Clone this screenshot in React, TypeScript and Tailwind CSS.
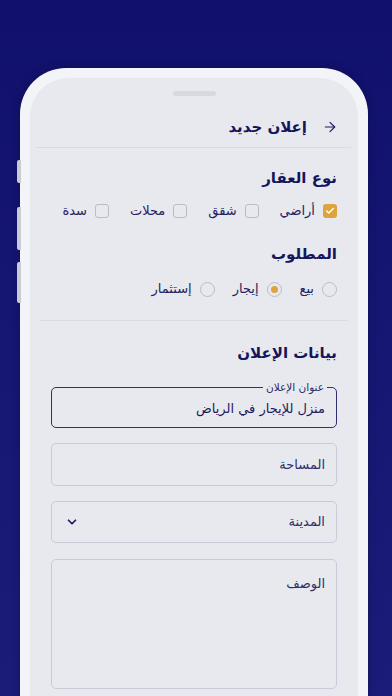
import { ArrowRight, Check, ChevronDown } from "lucide-react";

const font = { fontFamily: '"DejaVu Sans", "Noto Sans", sans-serif' };

function CheckItem({ label, checked }: { label: string; checked?: boolean }) {
    return (
        <div className="flex items-center gap-[8px]">
            {checked ? (
                <span className="flex h-[14px] w-[14px] items-center justify-center rounded-[3px] bg-[#dea33b]">
                    <Check className="h-[10px] w-[10px] text-white" strokeWidth={3.5} />
                </span>
            ) : (
                <span className="h-[14px] w-[14px] rounded-[3px] border border-[#b9bdc9]" />
            )}
            <span className="text-[13px] text-[#23235f]">{label}</span>
        </div>
    );
}

function RadioItem({ label, checked }: { label: string; checked?: boolean }) {
    return (
        <div className="flex items-center gap-[8px]">
            <span className="flex h-[15px] w-[15px] items-center justify-center rounded-full border border-[#b9bdc9]">
                {checked && <span className="h-[7px] w-[7px] rounded-full bg-[#dea33b]" />}
            </span>
            <span className="text-[13px] text-[#23235f]">{label}</span>
        </div>
    );
}

export default function App() {
    return (
        <div
            dir="rtl"
            style={font}
            className="relative h-[696px] w-[392px] overflow-hidden bg-gradient-to-b from-[#11106d] to-[#1b1c79]"
        >
            <div className="absolute left-[20px] top-[68px] h-[700px] w-[348px]">
                {/* Side buttons */}
                <span className="absolute left-[-3px] top-[92px] h-[23px] w-[4px] rounded-l-[2px] bg-[#c9ccd6]" />
                <span className="absolute left-[-3px] top-[139px] h-[43px] w-[4px] rounded-l-[2px] bg-[#c9ccd6]" />
                <span className="absolute left-[-3px] top-[194px] h-[41px] w-[4px] rounded-l-[2px] bg-[#c9ccd6]" />

                {/* Phone body */}
                <div className="h-full w-full rounded-t-[46px] bg-[#f3f4f7] px-[10px] pt-[10px] shadow-[0_0_10px_rgba(0,0,0,0.25)]">
                    <div className="flex h-full flex-col rounded-t-[38px] bg-[#e8e9ee]">
                        <div className="flex justify-center pt-[13px]">
                            <span className="h-[5px] w-[43px] rounded-full bg-[#d6d9e0]" />
                        </div>

                        {/* Header */}
                        <div className="mx-[7px] flex h-[52px] items-center gap-[15px] border-b border-[#d8dbe2] pl-[14px] pr-[13px] pt-[11px]">
                            <ArrowRight className="h-[16px] w-[16px] text-[#1b1b5c]" strokeWidth={1.7} />
                            <span className="text-[15px] font-bold text-[#15155a]">إعلان جديد</span>
                        </div>

                        <div className="px-[21px]">
                            <div className="mt-[20px] text-[15px] font-bold leading-[20px] text-[#15155a]">نوع العقار</div>
                            <div className="mt-[14px] flex items-center gap-[21px] leading-[18px]">
                                <CheckItem label="أراضي" checked />
                                <CheckItem label="شقق" />
                                <CheckItem label="محلات" />
                                <CheckItem label="سدة" />
                            </div>

                            <div className="mt-[24px] text-[15px] font-bold leading-[20px] text-[#15155a]">المطلوب</div>
                            <div className="mt-[16px] flex items-center gap-[18px] leading-[18px]">
                                <RadioItem label="بيع" />
                                <RadioItem label="إيجار" checked />
                                <RadioItem label="إستثمار" />
                            </div>
                        </div>

                        <div className="mx-[10px] mt-[22px] border-b border-[#d8dbe2]" />

                        <div className="px-[21px]">
                            <div className="mt-[22px] text-[15px] font-bold leading-[20px] text-[#15155a]">بيانات الإعلان</div>

                            <div className="relative mt-[24px] flex h-[41px] items-center rounded-[5px] border border-[#2f3070] px-[11px]">
                                <span className="absolute right-[9px] top-[-8px] bg-[#e8e9ee] px-[3px] text-[10.5px] leading-[14px] text-[#2b2c68]">
                                    عنوان الإعلان
                                </span>
                                <span className="pt-[3px] text-[13px] text-[#1b1b5c]">منزل للإيجار في الرياض</span>
                            </div>

                            <div className="mt-[15px] flex h-[43px] items-center rounded-[5px] border border-[#c7ccd8] px-[11px]">
                                <span className="text-[13px] text-[#2e2f6b]">المساحة</span>
                            </div>

                            <div className="mt-[15px] flex h-[42px] items-center justify-between rounded-[5px] border border-[#c7ccd8] px-[11px]">
                                <span className="text-[13px] text-[#2e2f6b]">المدينة</span>
                                <ChevronDown className="ml-[2px] h-[14px] w-[14px] text-[#1b1b5c]" strokeWidth={3} />
                            </div>

                            <div className="mt-[16px] h-[130px] rounded-[5px] border border-[#c7ccd8] px-[11px] pt-[11px]">
                                <span className="text-[13px] text-[#2e2f6b]">الوصف</span>
                            </div>
                        </div>
                    </div>
                </div>
            </div>
        </div>
    );
}
